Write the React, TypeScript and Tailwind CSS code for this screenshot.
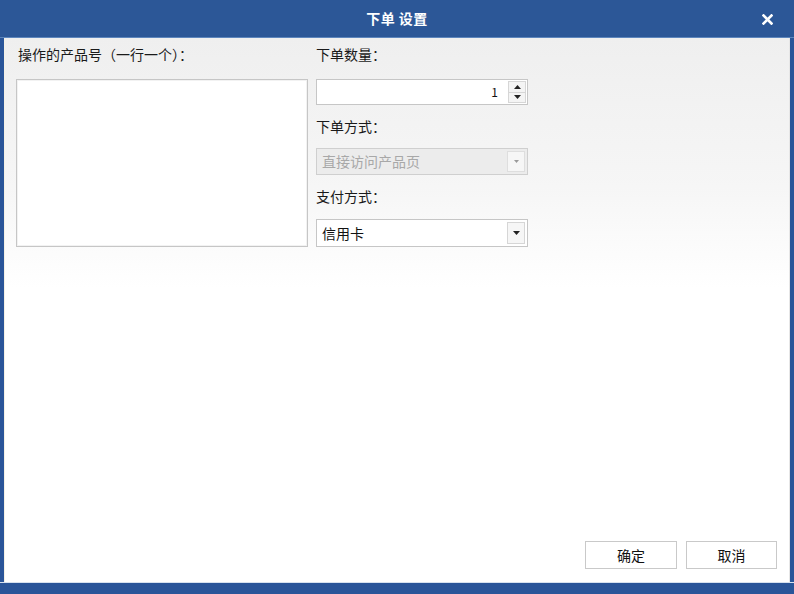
import React from 'react';

const font = { fontFamily: '"Noto Sans CJK SC", "Liberation Sans", sans-serif' };

function Caret({ disabled }: { disabled?: boolean }) {
  return (
    <svg width="7" height="4" viewBox="0 0 7 4">
      <path d="M0 0 L7 0 L3.5 4 Z" fill={disabled ? '#9a9a9a' : '#222'} />
    </svg>
  );
}

function Label({ children, className = '' }: { children: React.ReactNode; className?: string }) {
  return <div className={`h-[20px] leading-[20px] text-[14px] text-[#1a1a1a] ${className}`}>{children}</div>;
}

export default function App() {
  return (
    <div className="w-[794px] h-[594px] flex flex-col bg-[#2a5599] overflow-hidden" style={font}>
      {/* Title bar */}
      <div className="relative h-[38px] flex items-center justify-center bg-[#2c5797] border-b border-[#5d86bd]">
        <span className="text-white text-[14px] font-bold tracking-[0.5px]">下单 设置</span>
        <svg className="absolute right-[21px] top-[14px]" width="11" height="11" viewBox="0 0 11 11">
          <path d="M1.5 1.5 L9.5 9.5 M9.5 1.5 L1.5 9.5" stroke="#fff" strokeWidth="2.6" strokeLinecap="square" />
        </svg>
      </div>

      <div className="flex flex-1 min-h-0">
        <div className="w-[4px] bg-[#2a5599]" />
        {/* Content */}
        <div className="flex-1 flex flex-col bg-[linear-gradient(#efefef,#f6f6f6_150px,#ffffff_250px)] border-l border-[#f4f1e6]">
          <div className="flex gap-[8px] pl-[11px] pt-[6px]">
            {/* Left column */}
            <div className="w-[292px] flex flex-col">
              <Label className="pl-[2px]">操作的产品号（一行一个）：</Label>
              <div className="mt-[15px] h-[168px] bg-white border border-[#c6c6c6] shadow-[inset_0_0_0_1px_#f2f2f2]" />
            </div>

            {/* Right column */}
            <div className="w-[212px] flex flex-col">
              <Label>下单数量：</Label>
              <div className="mt-[15px] h-[26px] flex bg-white border border-[#c6c6c6]">
                <div className="flex-1 flex items-center justify-end pr-[10px] text-[12px] text-[#111]">1</div>
                <div className="w-[18px] my-[1px] mr-[1px] flex flex-col border border-[#d6d6d6] bg-[#f4f4f4]">
                  <div className="flex-1 flex items-center justify-center border-b border-[#d6d6d6]">
                    <svg width="7" height="4" viewBox="0 0 7 4"><path d="M0 4 L7 4 L3.5 0 Z" fill="#222" /></svg>
                  </div>
                  <div className="flex-1 flex items-center justify-center">
                    <Caret />
                  </div>
                </div>
              </div>

              <Label className="mt-[11px]">下单方式：</Label>
              <div className="mt-[12px] h-[27px] flex bg-[#ececec] border border-[#cfcfcf]">
                <div className="flex-1 flex items-center pl-[5px] text-[14px] text-[#a8a8a8]">直接访问产品页</div>
                <div className="w-[18px] my-[2px] mr-[2px] flex items-center justify-center bg-[#f6f6f6] border border-[#dedede]">
                  <svg width="5" height="3" viewBox="0 0 5 3"><path d="M0 0 L5 0 L2.5 3 Z" fill="#9a9a9a" /></svg>
                </div>
              </div>

              <Label className="mt-[11px]">支付方式：</Label>
              <div className="mt-[13px] h-[28px] flex bg-white border border-[#c6c6c6]">
                <div className="flex-1 flex items-center pl-[5px] text-[14px] text-[#111]">信用卡</div>
                <div className="w-[18px] my-[2px] mr-[2px] flex items-center justify-center bg-[#f6f6f6] border border-[#d6d6d6]">
                  <Caret />
                </div>
              </div>
            </div>
          </div>

          <div className="flex-1" />

          {/* Footer buttons */}
          <div className="flex justify-end gap-[9px] pr-[12px] pb-[13px]">
            <button className="w-[92px] h-[28px] bg-white border border-[#c9c9c9] text-[14px] text-[#111]">确定</button>
            <button className="w-[91px] h-[28px] bg-white border border-[#c9c9c9] text-[14px] text-[#111]">取消</button>
          </div>
        </div>
        <div className="w-[1px] bg-[#e6e6e6]" />
        <div className="w-[4px] bg-[#2a5599]" />
      </div>

      <div className="h-[12px] bg-[#2a5599] border-t border-[#d8e2ef]" />
    </div>
  );
}
